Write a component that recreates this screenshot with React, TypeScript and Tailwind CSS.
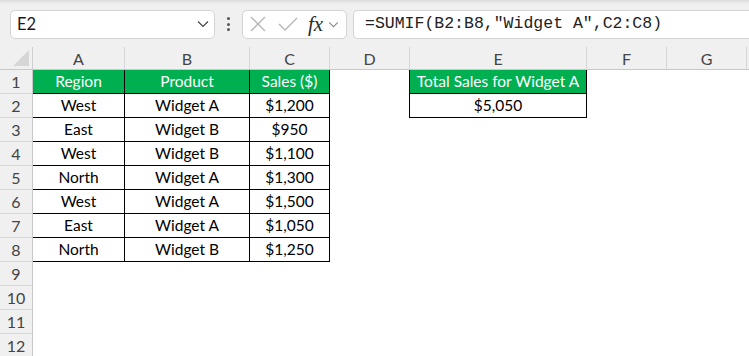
import React from "react";

const cols = [
  { l: "A", w: 92 },
  { l: "B", w: 125 },
  { l: "C", w: 80 },
  { l: "D", w: 80 },
  { l: "E", w: 177 },
  { l: "F", w: 80 },
  { l: "G", w: 80 },
];

const data: string[][] = [
  ["West", "Widget A", "$1,200"],
  ["East", "Widget B", "$950"],
  ["West", "Widget B", "$1,100"],
  ["North", "Widget A", "$1,300"],
  ["West", "Widget A", "$1,500"],
  ["East", "Widget A", "$1,050"],
  ["North", "Widget B", "$1,250"],
];

const font = { fontFamily: "Lato, 'Noto Sans', sans-serif" };

function Chevron({ className }: { className?: string }) {
  return (
    <svg className={className} viewBox="0 0 12 8" fill="none" stroke="currentColor" strokeWidth="1.2">
      <path d="M1 1.5 L6 6.5 L11 1.5" />
    </svg>
  );
}

export default function App() {
  const rows = Array.from({ length: 12 }, (_, i) => i + 1);
  return (
    <div className="w-[749px] h-[356px] overflow-hidden bg-[#f0f0f0] relative" style={font}>
      <div className="h-[4px] bg-gradient-to-b from-[#dcdcdc] to-[#f0f0f0]" />
      {/* toolbar */}
      <div className="flex items-center h-[30px] mt-[5px] pl-[10px]">
        <div className="w-[205px] h-[29px] bg-white border border-[#d4d4d4] rounded-[5px] flex items-center justify-between pl-[6px] pr-[5px]">
          <span className="text-[16.5px] text-[#1a1a1a] leading-none pt-[1px]">E2</span>
          <Chevron className="w-[12px] h-[8px] text-[#444]" />
        </div>
        <div className="w-[27px] flex flex-col items-center gap-[2.5px]">
          <div className="w-[3px] h-[3px] bg-[#555] rounded-full" />
          <div className="w-[3px] h-[3px] bg-[#555] rounded-full" />
          <div className="w-[3px] h-[3px] bg-[#555] rounded-full" />
        </div>
        <div className="w-[105px] h-[29px] bg-white border border-[#d4d4d4] rounded-[5px] flex items-center pl-[7px]">
          <svg className="w-[16px] h-[16px]" viewBox="0 0 16 16" fill="none" stroke="#b5b5b5" strokeWidth="1.3">
            <path d="M1 1 L15 15 M15 1 L1 15" />
          </svg>
          <svg className="w-[20px] h-[14px] ml-[12px]" viewBox="0 0 20 14" fill="none" stroke="#b5b5b5" strokeWidth="1.3">
            <path d="M1 7 L7 13 L19 1" />
          </svg>
          <span
            className="ml-[10px] text-[21px] italic leading-none text-[#2a2a2a]"
            style={{ fontFamily: "'Liberation Serif', serif" }}
          >
            fx
          </span>
          <Chevron className="w-[11px] h-[7px] ml-[5px] text-[#888]" />
        </div>
        <div className="ml-[6px] flex-1 h-[29px] bg-white border border-[#d4d4d4] border-r-0 rounded-l-[5px] flex items-center pl-[11px]">
          <span className="text-[16.5px] text-[#222] leading-none pt-[1px]" style={{ fontFamily: "'Liberation Mono', monospace" }}>
            =SUMIF(B2:B8,"Widget A",C2:C8)
          </span>
        </div>
      </div>
      {/* column headers */}
      <div className="flex h-[23px] mt-[8px] border-b border-[#c8c8c8]">
        <div className="w-[33px] shrink-0 border-r border-[#d0d0d0] flex items-end justify-end pr-[3px] pb-[3px]">
          <svg className="w-[16px] h-[16px]" viewBox="0 0 16 16">
            <path d="M16 0 L16 16 L0 16 Z" fill="#d6d6d6" />
          </svg>
        </div>
        {cols.map((c) => (
          <div
            key={c.l}
            className="shrink-0 border-r border-[#d6d6d6] flex items-center justify-center text-[16px] text-[#444] pt-[1px]"
            style={{ width: c.w }}
          >
            {c.l}
          </div>
        ))}
      </div>
      {/* body */}
      <div className="flex">
        <div className="w-[33px] shrink-0 border-r border-[#c8c8c8]">
          {rows.map((r) => (
            <div key={r} className="h-[24px] border-b border-[#dadada] flex items-center justify-center text-[16px] text-[#444] pt-[1px]">
              {r}
            </div>
          ))}
        </div>
        <div className="flex-1 bg-white h-[300px] flex items-start">
          <div className="flex flex-col w-[297px] shrink-0">
            <div className="flex h-[24px] bg-[#00b050] text-white text-[15.5px] border-b border-black">
              <div className="w-[92px] border-r border-black flex items-center justify-center pt-[1px]">Region</div>
              <div className="w-[125px] border-r border-black flex items-center justify-center pt-[1px]">Product</div>
              <div className="w-[80px] border-r border-black flex items-center justify-center pt-[1px]">Sales ($)</div>
            </div>
            {data.map((d, i) => (
              <div key={i} className="flex h-[24px] text-[15.5px] text-black border-b border-black">
                <div className="w-[92px] border-r border-black flex items-center justify-center pt-[1px]">{d[0]}</div>
                <div className="w-[125px] border-r border-black flex items-center justify-center pt-[1px]">{d[1]}</div>
                <div className="w-[80px] border-r border-black flex items-center justify-center pt-[1px]">{d[2]}</div>
              </div>
            ))}
          </div>
          <div className="w-[79px] shrink-0" />
          <div className="flex flex-col w-[178px] shrink-0 border-l border-black">
            <div className="h-[24px] bg-[#00b050] text-white text-[15.5px] border-b border-r border-black flex items-center justify-center pt-[1px]">
              Total Sales for Widget A
            </div>
            <div className="h-[24px] text-black text-[15.5px] border-b border-r border-black flex items-center justify-center pt-[1px]">
              $5,050
            </div>
          </div>
        </div>
      </div>
    </div>
  );
}
